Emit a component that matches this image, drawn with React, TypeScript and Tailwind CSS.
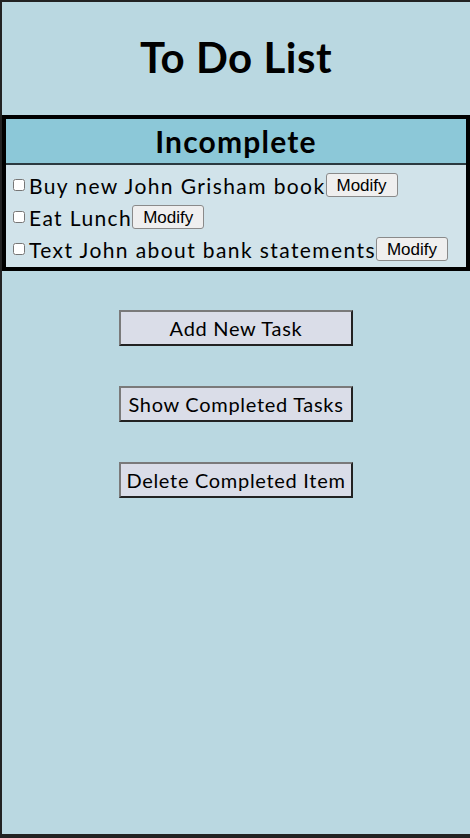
import React from "react";

const tasks = [
  "Buy new John Grisham book",
  "Eat Lunch",
  "Text John about bank statements",
];

const actions = ["Add New Task", "Show Completed Tasks", "Delete Completed Item"];

export default function App() {
  return (
    <div
      className="h-[838px] w-[470px] box-border bg-[#bad8e1] border-t-2 border-l-2 border-b-4 border-[#222222] text-black"
      style={{ fontFamily: "Lato, 'Noto Sans', sans-serif" }}
    >
      <div className="h-[113px] flex items-center justify-center">
        <h1 className="text-[42px] font-bold leading-none tracking-[0.5px] pb-1">To Do List</h1>
      </div>
      <div className="border-4 border-black">
        <div className="h-[46px] bg-[#8cc8d8] border-b-2 border-[#2b3a40] flex items-center justify-center">
          <h2 className="text-[30px] font-bold leading-none tracking-[1.2px]">Incomplete</h2>
        </div>
        <div className="bg-[#d1e3ea] pt-[4px] pb-[2px] pl-[3px]">
          {tasks.map((t) => (
            <div key={t} className="flex items-center h-[32px]">
              <input type="checkbox" className="w-[12px] h-[12px] ml-[4px] mr-[4px] my-0" />
              <span className="text-[21px] leading-none tracking-[1.4px]">{t}</span>
              <button
                className="h-[24px] px-[10px] bg-[#efefef] border border-[#8a8a8a] rounded-[3px] text-[17px] leading-none text-black"
                style={{ fontFamily: "'Liberation Sans', Arial, sans-serif" }}
              >
                Modify
              </button>
            </div>
          ))}
        </div>
      </div>
      <div className="flex flex-col items-center gap-[40px] pt-[39px]">
        {actions.map((a) => (
          <button
            key={a}
            className="w-[234px] h-[36px] bg-[#dadde8] border-2 border-t-[#7a7a7a] border-l-[#7a7a7a] border-r-[#222222] border-b-[#222222] text-[20px] leading-none tracking-[0.7px] text-black"
          >
            {a}
          </button>
        ))}
      </div>
    </div>
  );
}
